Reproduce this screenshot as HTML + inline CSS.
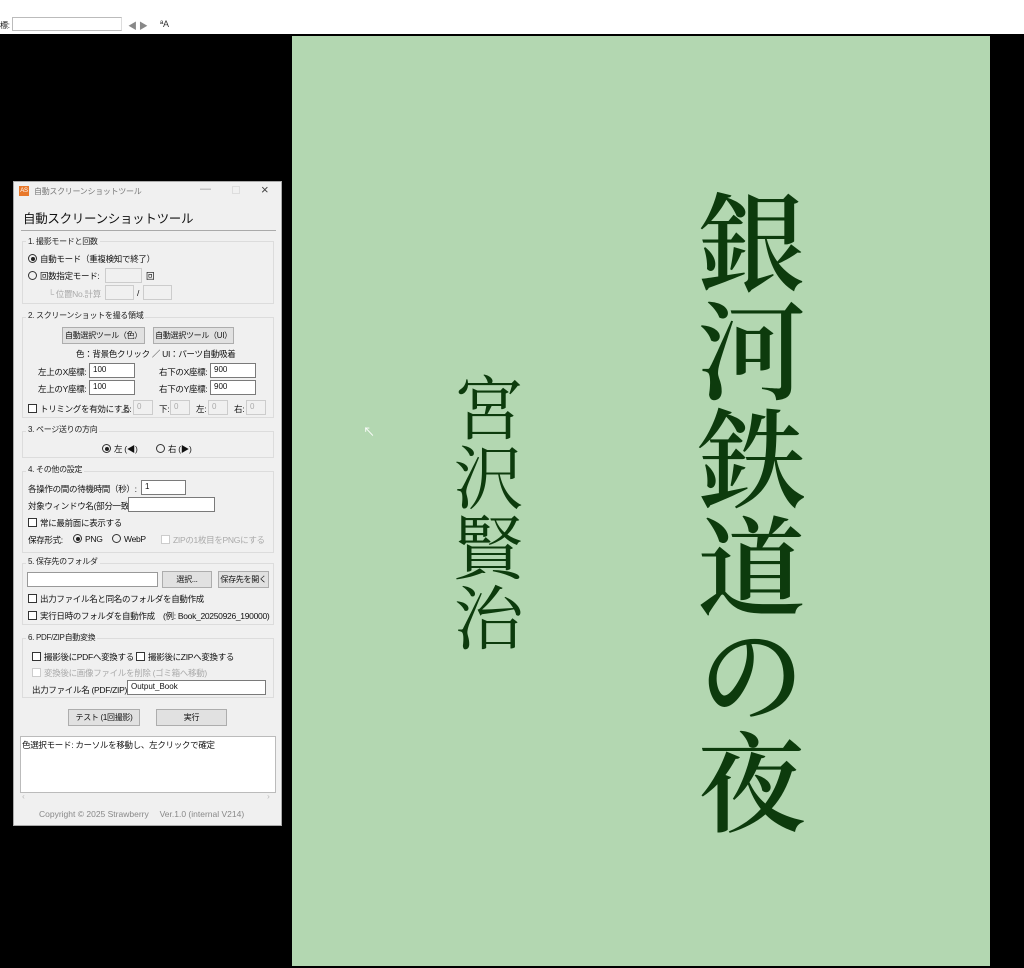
<!DOCTYPE html>
<html><head><meta charset="utf-8"><style>
*{margin:0;padding:0;box-sizing:border-box}
body{width:1024px;height:968px;position:relative;background:#000;font-family:"Liberation Sans","Noto Sans CJK JP",sans-serif;font-size:8.5px;letter-spacing:-0.3px;color:#111;overflow:hidden}
.a{position:absolute;white-space:nowrap}
.top{left:0;top:0;width:1024px;height:34px;background:#fff}
.page{left:292px;top:36px;width:698px;height:930px;background:#b3d7b1}
.vt{font-family:"Noto Serif CJK SC","Liberation Serif",serif;color:#0d3b0d;writing-mode:vertical-rl;font-weight:600;letter-spacing:0}
.win{left:13px;top:181px;width:269px;height:645px;background:#f0f0f0;border:1px solid #aaa}
.grp{position:absolute;border:1px solid #dcdcdc;left:8px;width:252px}
.lbl{position:absolute;background:#f0f0f0;padding:0 2px;font-size:8px;color:#222}
.inp{position:absolute;background:#fff;border:1px solid #7a7a7a;height:15px;font-size:8px;padding:1px 3px;letter-spacing:0}
.dis{background:#f0f0f0;border-color:#ccc;color:#aaa}
.btn{position:absolute;background:#e1e1e1;border:1px solid #adadad;height:17px;font-size:8px;text-align:center;line-height:15px}
.rd{display:inline-block;width:9px;height:9px;border:1px solid #333;border-radius:50%;vertical-align:-1px;margin-right:3px;position:relative}
.rd.on::after{content:"";position:absolute;left:1.5px;top:1.5px;width:4px;height:4px;border-radius:50%;background:#222}
.cb{display:inline-block;width:9px;height:9px;border:1px solid #333;vertical-align:-1px;margin-right:3px;background:#fff}
.cb.d{border-color:#ccc}
</style></head><body>
<div class="a top">
<div class="a" style="left:0;top:20px;font-size:8px">標:</div>
<div class="a" style="left:12px;top:17px;width:110px;height:14px;border:1px solid #bbb;border-right-color:#ddd"></div>
<div class="a" style="left:128px;top:19px;font-size:9px;color:#888">◀ ▶</div>
<div class="a" style="left:160px;top:19px;font-size:9px;color:#333">ªA</div>
</div>
<div class="a page"></div>
<div class="a vt" style="left:692px;top:188px;font-size:108px;line-height:118px">銀河鉄道の夜</div>
<div class="a vt" style="left:449px;top:372px;font-size:70px;line-height:78px;font-weight:400">宮沢賢治</div>
<div class="a" style="left:363px;top:423px;font-size:12px;color:#fff">↖</div>

<div class="a win">
<div class="a" style="left:5px;top:4px;width:10px;height:10px;background:#e8782a;font-size:6px;color:#fff;text-align:center;line-height:10px">AS</div>
<div class="a" style="left:20px;top:4px;color:#777;font-size:8px">自動スクリーンショットツール</div>
<div class="a" style="left:186px;top:1px;color:#999;font-size:11px">—</div>
<div class="a" style="left:218px;top:4px;width:8px;height:8px;border:1px solid #ddd"></div>
<div class="a" style="left:247px;top:0px;color:#444;font-size:13px">×</div>
<div class="a" style="left:9px;top:26px;font-size:12.5px;color:#111">自動スクリーンショットツール</div>
<div class="a" style="left:7px;top:48px;width:255px;height:1px;background:#aaa"></div>

<div class="grp" style="top:59px;height:63px"></div>
<div class="lbl" style="left:12px;top:54px">1. 撮影モードと回数</div>
<div class="a" style="left:14px;top:71px"><span class="rd on"></span>自動モード（重複検知で終了）</div>
<div class="a" style="left:14px;top:88px"><span class="rd"></span>回数指定モード:</div>
<div class="inp dis" style="left:91px;top:86px;width:37px"></div>
<div class="a" style="left:132px;top:88px">回</div>
<div class="a" style="left:34px;top:106px;color:#aaa">└ 位置No.計算</div>
<div class="inp dis" style="left:91px;top:103px;width:29px"></div>
<div class="a" style="left:123px;top:106px">/</div>
<div class="inp dis" style="left:129px;top:103px;width:29px"></div>

<div class="grp" style="top:135px;height:101px"></div>
<div class="lbl" style="left:12px;top:128px">2. スクリーンショットを撮る領域</div>
<div class="btn" style="left:48px;top:145px;width:83px">自動選択ツール（色）</div>
<div class="btn" style="left:139px;top:145px;width:81px">自動選択ツール（UI）</div>
<div class="a" style="left:62px;top:166px">色：背景色クリック ／ UI：パーツ自動吸着</div>
<div class="a" style="left:24px;top:184px">左上のX座標:</div>
<div class="inp" style="left:75px;top:181px;width:46px">100</div>
<div class="a" style="left:145px;top:184px">右下のX座標:</div>
<div class="inp" style="left:196px;top:181px;width:46px">900</div>
<div class="a" style="left:24px;top:201px">左上のY座標:</div>
<div class="inp" style="left:75px;top:198px;width:46px">100</div>
<div class="a" style="left:145px;top:201px">右下のY座標:</div>
<div class="inp" style="left:196px;top:198px;width:46px">900</div>
<div class="a" style="left:14px;top:221px"><span class="cb"></span>トリミングを有効にする</div>
<div class="a" style="left:107px;top:221px">上:</div><div class="inp dis" style="left:119px;top:218px;width:20px">0</div>
<div class="a" style="left:145px;top:221px">下:</div><div class="inp dis" style="left:156px;top:218px;width:20px">0</div>
<div class="a" style="left:182px;top:221px">左:</div><div class="inp dis" style="left:194px;top:218px;width:20px">0</div>
<div class="a" style="left:220px;top:221px">右:</div><div class="inp dis" style="left:232px;top:218px;width:20px">0</div>

<div class="grp" style="top:249px;height:27px"></div>
<div class="lbl" style="left:12px;top:242px">3. ページ送りの方向</div>
<div class="a" style="left:88px;top:261px"><span class="rd on"></span>左 (◀)</div>
<div class="a" style="left:142px;top:261px"><span class="rd"></span>右 (▶)</div>

<div class="grp" style="top:289px;height:82px"></div>
<div class="lbl" style="left:12px;top:282px">4. その他の設定</div>
<div class="a" style="left:14px;top:301px">各操作の間の待機時間（秒）:</div>
<div class="inp" style="left:127px;top:298px;width:45px">1</div>
<div class="a" style="left:14px;top:318px">対象ウィンドウ名(部分一致):</div>
<div class="inp" style="left:114px;top:315px;width:87px"></div>
<div class="a" style="left:14px;top:335px"><span class="cb"></span>常に最前面に表示する</div>
<div class="a" style="left:14px;top:352px">保存形式:</div>
<div class="a" style="left:59px;top:352px"><span class="rd on"></span>PNG</div>
<div class="a" style="left:98px;top:352px"><span class="rd"></span>WebP</div>
<div class="a" style="left:147px;top:352px;color:#aaa"><span class="cb d"></span>ZIPの1枚目をPNGにする</div>

<div class="grp" style="top:381px;height:62px"></div>
<div class="lbl" style="left:12px;top:374px">5. 保存先のフォルダ</div>
<div class="inp" style="left:13px;top:390px;width:131px;border-color:#999"></div>
<div class="btn" style="left:148px;top:389px;width:50px">選択...</div>
<div class="btn" style="left:204px;top:389px;width:51px">保存先を開く</div>
<div class="a" style="left:14px;top:411px"><span class="cb"></span>出力ファイル名と同名のフォルダを自動作成</div>
<div class="a" style="left:14px;top:428px"><span class="cb"></span>実行日時のフォルダを自動作成　(例: Book_20250926_190000)</div>

<div class="grp" style="top:456px;height:60px"></div>
<div class="lbl" style="left:12px;top:450px">6. PDF/ZIP自動変換</div>
<div class="a" style="left:18px;top:469px"><span class="cb"></span>撮影後にPDFへ変換する</div>
<div class="a" style="left:122px;top:469px"><span class="cb"></span>撮影後にZIPへ変換する</div>
<div class="a" style="left:18px;top:485px;color:#aaa"><span class="cb d"></span>変換後に画像ファイルを削除 (ゴミ箱へ移動)</div>
<div class="a" style="left:18px;top:502px">出力ファイル名 (PDF/ZIP):</div>
<div class="inp" style="left:113px;top:498px;width:139px">Output_Book</div>

<div class="btn" style="left:54px;top:527px;width:72px">テスト (1回撮影)</div>
<div class="btn" style="left:142px;top:527px;width:71px">実行</div>

<div class="a" style="left:6px;top:554px;width:256px;height:57px;background:#fff;border:1px solid #bbb;padding:2px 1px">色選択モード: カーソルを移動し、左クリックで確定</div>
<div class="a" style="left:8px;top:609px;color:#bbb">‹</div>
<div class="a" style="left:253px;top:609px;color:#bbb">›</div>
<div class="a" style="left:25px;top:626px;color:#888;font-size:8.5px;letter-spacing:0">Copyright © 2025 Strawberry　 Ver.1.0 (internal V214)</div>
</div>
</body></html>
